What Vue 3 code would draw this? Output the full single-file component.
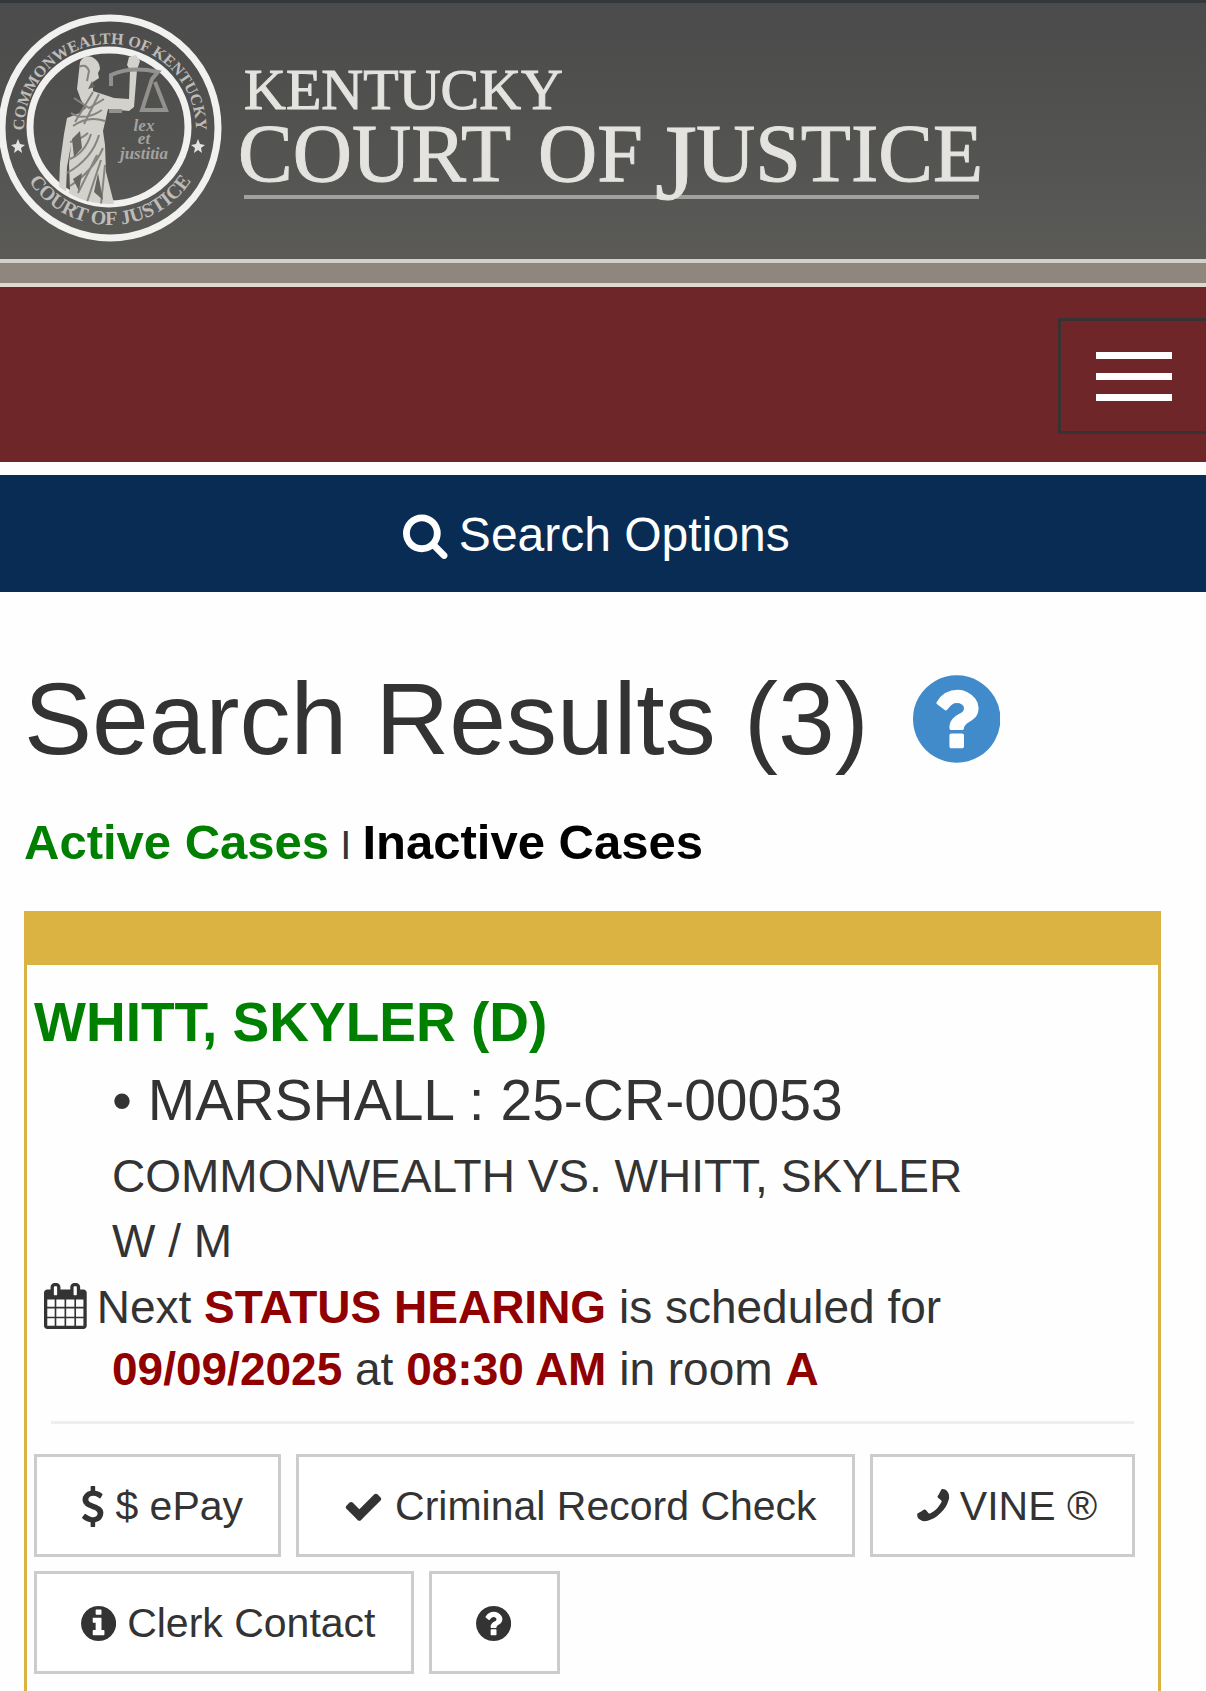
<template>
  <div class="page">
    <header class="banner">
      <a class="banner__logo" href="#" aria-label="Kentucky Court of Justice">
        <svg class="banner__svg" viewBox="0 3 1000 256" role="img">
          <defs>
            <path id="seal-top" d="M25 143 A86 86 0 1 1 195 143" />
            <path id="seal-bottom" d="M13 128 A97 97 0 0 0 207 128" />
            <clipPath id="seal-clip"><ellipse cx="109" cy="127" rx="79" ry="77" /></clipPath>
          </defs>

          <ellipse cx="110" cy="128" rx="108" ry="110" class="seal-ring" />
          <ellipse cx="109" cy="127" rx="79" ry="77" class="seal-ring" />
          <text class="seal-text seal-text--top"><textPath href="#seal-top" startOffset="50%">COMMONWEALTH OF KENTUCKY</textPath></text>
          <text class="seal-text seal-text--bottom"><textPath href="#seal-bottom" startOffset="50%">COURT OF JUSTICE</textPath></text>
          <path class="seal-star" d="M18 139l2 5 5 1-4 3 1 5-4-3-4 3 1-5-4-3 5-1zM198 139l2 5 5 1-4 3 1 5-4-3-4 3 1-5-4-3 5-1z" />

          <!-- Lady Justice -->
          <g clip-path="url(#seal-clip)">
            <path class="statue" d="M80 62q4-8 12-5 8 4 8 12l-2 4 1 5-6 4v9l12 4 9 3 15 1 1-29-3-5 2-8 7-2 4 6-3 9-3 37-5 4-21-2-5 22 2 14 1 27 12 47-2 8q-27 2-47-14l-5-9 6-15-1-25 2-19-4 22-1 24-7-1 1-27 4-29 3-16 13-5 6-5-5-8-4-11z" />
            <path class="statue-fold" d="M79 67q7-4 10 4l-2 10M74 98l15 10 15-9M71 113q13 9 31-3M73 126q15-11 32-5M99 135Q92 159 67 173M91 134Q85 153 70 159M103 148Q93 171 70 186M101 160L87 202M105 165L101 204M97 155L78 193M70 142q10-2 18-9M93 92L75 122M99 94L84 124" />
            <path class="statue-shade" d="M80 131l-8 8 2 18 8-9zM73 179l9-6-3 18zM98 173l5 27-9-8zM92 81l-4 8 7-2z" />
            <g class="scales">
              <path d="M111 86V75q20-9 47-3l-6 7-10 31h24l-11-28M109 111h13" />
            </g>
          </g>
          <g class="seal-motto">
            <text x="144" y="131">lex</text>
            <text x="144" y="144">et</text>
            <text x="144" y="159">justitia</text>
          </g>

          <path class="logo-rule" d="M244 197H979" />
          <text class="logo-text logo-text--small" x="244" y="109">KENTUCKY</text>
          <text class="logo-text logo-text--large" x="238" y="181">COURT <tspan x="538">OF</tspan> <tspan class="logo-text__j" x="655" y="199">J</tspan><tspan x="696" y="181">USTICE</tspan></text>
        </svg>
      </a>
    </header>

    <nav class="navbar">
      <button class="navbar__toggle" type="button" aria-label="Toggle navigation">
        <span class="navbar__bar"></span>
        <span class="navbar__bar"></span>
        <span class="navbar__bar"></span>
      </button>
    </nav>

    <button class="search-options" type="button">
      <svg class="icon" :viewBox="icons.search.box"><path :d="icons.search.d" /></svg>
      <span>Search Options</span>
    </button>

    <main class="results">
      <h1 class="results__title">
        <span>Search Results ({{ total }})</span>
        <a class="results__help" href="#" aria-label="Help">
          <svg class="icon" :viewBox="icons.question.box"><path :d="icons.question.d" /></svg>
        </a>
      </h1>

      <div class="results__filter">
        <a class="results__active" href="#">Active Cases</a> I <a class="results__inactive" href="#">Inactive Cases</a>
      </div>

      <article class="case">
        <div class="case__head"></div>
        <div class="case__body">
          <h2 class="case__name">WHITT, SKYLER (D)</h2>
          <div class="case__number">• MARSHALL : 25-CR-00053</div>
          <div class="case__detail">COMMONWEALTH VS. WHITT, SKYLER</div>
          <div class="case__detail">W / M</div>
          <p class="case__hearing">
            <svg class="icon case__calendar" :viewBox="icons.calendar.box"><path :d="icons.calendar.d" /></svg>Next <strong>STATUS HEARING</strong> is scheduled for <strong>09/09/2025</strong> at <strong>08:30 AM</strong> in room <strong>A</strong>
          </p>
          <hr class="case__rule">
          <div class="case__actions">
            <button v-for="a in actions" :key="a.icon" class="btn" type="button" :aria-label="a.label || 'Help'">
              <svg class="icon" :class="{ 'icon--flip': a.flip }" :viewBox="icons[a.icon].box"><path :d="icons[a.icon].d" /></svg>
              <span>{{ a.label }}</span>
            </button>
          </div>
        </div>
      </article>
    </main>
  </div>
</template>

<script setup>
import { ref } from 'vue'

const total = ref(3)

const actions = [
  { icon: 'dollar', label: '$ ePay' },
  { icon: 'check', label: 'Criminal Record Check' },
  { icon: 'phone', label: 'VINE ®', flip: true },
  { icon: 'info', label: 'Clerk Contact' },
  { icon: 'question', label: '' }
]

const disc = 'q0 209-103 385.5t-279.5 279.5-385.5 103-385.5-103-279.5-279.5-103-385.5 103-385.5 279.5-279.5 385.5-103 385.5 103 279.5 279.5 103 385.5z'

const icons = {
  search: {
    box: '64 0 1664 1792',
    d: 'M1216 832q0-185-131.5-316.5t-316.5-131.5-316.5 131.5-131.5 316.5 131.5 316.5 316.5 131.5 316.5-131.5 131.5-316.5zm512 832q0 52-38 90t-90 38q-54 0-90-38l-343-342q-179 124-399 124-143 0-273.5-55.5t-225-150-150-225-55.5-273.5 55.5-273.5 150-225 225-150 273.5-55.5 273.5 55.5 225 150 150 225 55.5 273.5q0 220-124 399l343 343q37 37 37 90z'
  },
  question: {
    box: '128 0 1536 1792',
    d: 'M1024 1376v-192q0-14-9-23t-23-9h-192q-14 0-23 9t-9 23v192q0 14 9 23t23 9h192q14 0 23-9t9-23zm256-672q0-88-55.5-163t-138.5-116-170-41q-243 0-371 213-15 24 8 42l132 100q7 6 19 6 16 0 25-12 53-68 86-92 34-24 86-24 48 0 85.5 26t37.5 59q0 38-20 61t-68 45q-63 28-115.5 86.5t-52.5 125.5v36q0 14 9 23t23 9h192q14 0 23-9t9-23q0-19 21.5-49.5t54.5-49.5q32-18 49-28.5t46-35 44.5-48 28-60.5 12.5-81zm384 192' + disc
  },
  info: {
    box: '128 0 1536 1792',
    d: 'M1152 1376v-160q0-14-9-23t-23-9h-96v-512q0-14-9-23t-23-9h-320q-14 0-23 9t-9 23v160q0 14 9 23t23 9h96v320h-96q-14 0-23 9t-9 23v160q0 14 9 23t23 9h448q14 0 23-9t9-23zm-128-896v-160q0-14-9-23t-23-9h-192q-14 0-23 9t-9 23v160q0 14 9 23t23 9h192q14 0 23-9t9-23zm640 416' + disc
  },
  check: {
    box: '0 0 1792 1792',
    d: 'M1671 566q0 40-28 68l-724 724-136 136q-28 28-68 28t-68-28l-136-136-362-362q-28-28-28-68t28-68l136-136q28-28 68-28t68 28l294 295 656-657q28-28 68-28t68 28l136 136q28 28 28 68z'
  },
  phone: {
    box: '192 0 1408 1792',
    d: 'M1600 1240q0 27-10 70.5t-21 68.5q-21 50-122 106-94 51-186 51-27 0-53-3.5t-57.5-12.5-47-14.5-55.5-20.5-49-18q-98-35-175-83-127-79-264-216t-216-264q-48-77-83-175-3-9-18-49t-20.5-55.5-14.5-47-12.5-57.5-3.5-53q0-92 51-186 56-101 106-122 25-11 68.5-21t70.5-10q14 0 21 3 18 6 53 76 11 19 30 54t35 63.5 31 53.5q3 4 17.5 25t21.5 35.5 7 28.5q0 20-28.5 50t-62 55-62 53-28.5 46q0 9 5 22.5t8.5 20.5 14 24 11.5 19q76 137 174 235t235 174q2 1 19 11.5t24 14 20.5 8.5 22.5 5q18 0 46-28.5t53-62 55-62 50-28.5q14 0 28.5 7t35.5 21.5 25 17.5q25 15 53.5 31t63.5 35 54 30q70 35 76 53 3 7 3 21z'
  },
  dollar: {
    box: '384 0 1024 1792',
    d: 'M1362 1185q0 153-99.5 263.5t-258.5 136.5v175q0 14-9 23t-23 9h-135q-13 0-22.5-9.5t-9.5-22.5v-175q-66-9-127.5-31t-101.5-44.5-74-48-46.5-37.5-17.5-18q-17-21-2-41l103-135q7-10 23-12 15-2 24 9l2 2q113 99 243 125 37 8 74 8 81 0 142.5-43t61.5-122q0-28-15-53t-33.5-42-58.5-37.5-66-32-80-32.5q-39-16-61.5-25t-61.5-26.5-62.5-31-56.5-35.5-53.5-42.5-43.5-49-35.5-58-21-66.5-8.5-78q0-138 98-242t255-134v-180q0-13 9.5-22.5t22.5-9.5h135q14 0 23 9t9 23v176q57 6 110.5 23t87 33.5 63.5 37.5 39 29 15 14q17 18 5 38l-81 146q-8 15-23 16-14 3-27-7-3-3-14.5-12t-39-26.5-58.5-32-74.5-26-85.5-11.5q-95 0-155 43t-60 111q0 26 8.5 48t29.5 41.5 39.5 33 56 31 60.5 27 70 27.5q53 20 81 31.5t76 35 75.5 42.5 62 50 53 63.5 31.5 76.5 13 94z'
  },
  calendar: {
    box: '64 0 1664 1792',
    d: 'M192 1664h288v-288h-288v288zm352 0h320v-288h-320v288zm-352-352h288v-320h-288v320zm352 0h320v-320h-320v320zm-352-384h288v-288h-288v288zm736 736h320v-288h-320v288zm-384-736h320v-288h-320v288zm768 736h288v-288h-288v288zm-384-352h320v-320h-320v320zm-352-864v-288q0-13-9.5-22.5t-22.5-9.5h-64q-13 0-22.5 9.5t-9.5 22.5v288q0 13 9.5 22.5t22.5 9.5h64q13 0 22.5-9.5t9.5-22.5zm736 864h288v-320h-288v320zm-384-384h320v-288h-320v288zm384 0h288v-288h-288v288zm32-480v-288q0-13-9.5-22.5t-22.5-9.5h-64q-13 0-22.5 9.5t-9.5 22.5v288q0 13 9.5 22.5t22.5 9.5h64q13 0 22.5-9.5t9.5-22.5zm384-64v1280q0 52-38 90t-90 38h-1408q-52 0-90-38t-38-90v-1280q0-52 38-90t90-38h128v-96q0-66 47-113t113-47h64q66 0 113 47t47 113v96h384v-96q0-66 47-113t113-47h64q66 0 113 47t47 113v96h128q52 0 90 38t38 90z'
  }
}
</script>

<style>
body { background: #fefefe; }
</style>

<style scoped>
.page {
  min-height: 100vh;
  display: flex;
  flex-direction: column;
  font-family: "Liberation Sans", Arial, Helvetica, sans-serif;
  color: #333;
  overflow-x: hidden;
}
.page * { box-sizing: border-box; }
a { text-decoration: none; }
button {
  font-family: inherit;
  border-radius: 0;
  cursor: pointer;
}
.icon {
  display: block;
  flex: none;
  height: 1em;
  width: auto;
  fill: currentColor;
}
.icon--flip { transform: scaleX(-1); }

/* banner */
.banner {
  border-top: 3px solid #35383b;
  background: linear-gradient(#4b4b4b, #515150 40%, #575756 72%, #5c5b55);
}
.banner::after {
  content: "";
  display: block;
  height: 20px;
  background: #8f877e;
  border-top: 4px solid #d3cfc9;
  border-bottom: 4px solid #e3d8cc;
}
.banner__logo { display: block; }
.banner__svg {
  display: block;
  width: 1000px;
  max-width: 100%;
}
.seal-ring {
  fill: none;
  stroke: #f1f1f0;
  stroke-width: 7;
}
.seal-text {
  font-family: "Liberation Serif", "Times New Roman", serif;
  font-weight: 700;
  fill: #bdbcb8;
  text-anchor: middle;
}
.seal-text--top { font-size: 16px; }
.seal-text--bottom { font-size: 20px; }
.seal-star { fill: #e4e4e2; }
.statue { fill: #d2d1cb; }
.statue-fold {
  fill: none;
  stroke: #85847f;
  stroke-width: 2;
}
.statue-shade { fill: #666561; }
.scales {
  fill: none;
  stroke: #92918e;
  stroke-width: 4;
}
.seal-motto {
  font: italic 700 17px "Liberation Serif", "Times New Roman", serif;
  fill: #a3a29f;
  text-anchor: middle;
}
.logo-rule {
  stroke: #a3a19e;
  stroke-width: 4;
}
.logo-text {
  font-family: "Liberation Serif", "Times New Roman", serif;
  fill: #e4e3df;
  stroke: #e4e3df;
  stroke-width: 1;
}
.logo-text--small { font-size: 58px; }
.logo-text--large { font-size: 82px; }
.logo-text__j { font-size: 108px; }

/* navbar */
.navbar {
  display: flex;
  justify-content: flex-end;
  padding: 31px 0 28px;
  margin-bottom: 13px;
  background: #6f2628;
}
.navbar__toggle {
  display: flex;
  flex-direction: column;
  gap: 14px;
  padding: 31px 34px 30px 35px;
  border: 3px solid #3a3132;
  border-right: 0;
  background: transparent;
}
.navbar__bar {
  width: 76px;
  height: 7px;
  background: #fff;
}

.search-options {
  display: flex;
  align-items: center;
  justify-content: center;
  gap: 11px;
  width: 100%;
  padding: 32px 13px 29px 0;
  border: 0;
  background: #082c53;
  color: #fff;
  font-size: 48px;
  line-height: 56px;
}

/* results */
.results {
  flex: 1;
  display: flex;
  flex-direction: column;
  padding: 71px 45px 0 24px;
}
.results__title {
  display: flex;
  align-items: center;
  gap: 44px;
  margin: 0 0 35px;
  font-size: 102px;
  font-weight: 400;
  line-height: 112px;
}
.results__help { color: #428bca; }
.results__filter {
  margin-bottom: 34px;
  font-size: 40px;
  line-height: 64px;
}
.results__active,
.results__inactive {
  font-size: 49px;
  font-weight: 700;
}
.results__active { color: #008000; }
.results__inactive { color: #000; }

/* case card */
.case {
  flex: 1;
  border: 3px solid #dab342;
  border-bottom: 0;
}
.case__head {
  height: 51px;
  background: #dab342;
}
.case__body { padding: 21px 7px 17px; }
.case__name {
  margin: 0;
  font-size: 55px;
  line-height: 72px;
  color: #008000;
}
.case__number {
  margin-bottom: 2px;
  padding-left: 78px;
  font-size: 57px;
  line-height: 84px;
}
.case__detail {
  padding-left: 78px;
  font-size: 46px;
  line-height: 65px;
}
.case__hearing {
  margin: 2px 0 0;
  padding-left: 78px;
  text-indent: -68px;
  font-size: 46px;
  line-height: 62px;
}
.case__hearing strong { color: #900000; }
.case__calendar {
  display: inline-block;
  margin-right: 10px;
  vertical-align: -6px;
}
.case__rule {
  height: 3px;
  margin: 21px 17px 30px;
  border: 0;
  background: #eee;
}
.case__actions {
  display: flex;
  flex-wrap: wrap;
  gap: 14px 15px;
}
.btn {
  display: flex;
  align-items: center;
  gap: 11px;
  padding: 25px 35px 24px 44px;
  border: 3px solid #ccc;
  background: #fff;
  color: #333;
  font-size: 41px;
  line-height: 48px;
}
</style>
